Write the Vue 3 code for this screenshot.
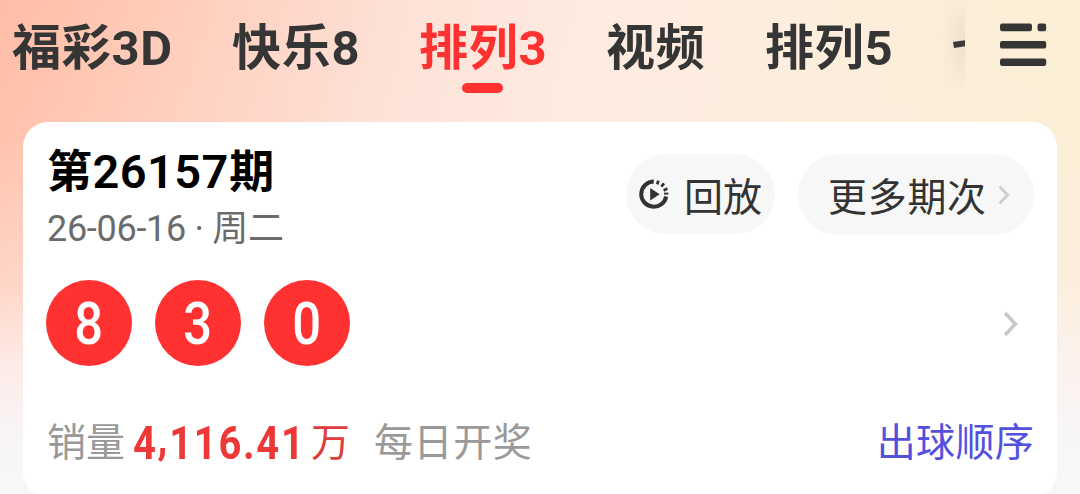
<script setup>
const tabs = [
  { name: '福彩3D', cls: 't1' },
  { name: '快乐8', cls: 't2' },
  { name: '排列3', cls: 't3', active: true },
  { name: '视频', cls: 't4' },
  { name: '排列5', cls: 't5' },
  { name: '七', cls: 't6' },
]
const balls = [8, 3, 0]
</script>

<template>
  <div class="page">
    <header class="top">
      <nav class="tabs">
        <span v-for="t in tabs" :key="t.name" class="tab" :class="[t.cls, { active: t.active }]">{{ t.name }}<i v-if="t.active" class="bar"></i></span>
        <span class="fade"></span>
      </nav>
      <svg class="menu" width="48" height="46" viewBox="0 0 48 46" fill="#353535">
        <rect x="0" y="0.6" width="32" height="7.6" rx="2.2" />
        <rect x="37.5" y="0.6" width="8.7" height="7.6" rx="2.2" />
        <rect x="0" y="18" width="46.2" height="7.6" rx="2.2" />
        <rect x="0" y="35.4" width="46.2" height="7.6" rx="2.2" />
      </svg>
    </header>

    <main class="card">
      <div class="head">
        <div class="issue">
          <h1>第<span class="num">26157</span>期</h1>
          <p>26-06-16 · 周二</p>
        </div>
        <div class="actions">
          <div class="pill replay">
            <svg width="30" height="31" viewBox="0 0 30 31" fill="none" stroke="#333">
              <path d="M14.8 2.5A12.6 12.6 0 1 0 27.2 17.5" stroke-width="4" />
              <path d="M18.3 5.4L19.3 1.6M22.3 7.6L25 4.4M24.6 11.4L28.4 9.6" stroke-width="2.8" />
              <path d="M25 14.6h4.4" stroke-width="2" />
              <path d="M11.2 9v12.4l9.4-6.2z" fill="#333" stroke="none" />
            </svg>
            <span>回放</span>
          </div>
          <div class="pill more">
            <span>更多期次</span>
            <svg width="12" height="20" viewBox="0 0 12 20" fill="none" stroke="#ccc" stroke-width="2.6"><path d="M1.5 1.5L9.7 10L1.5 18.5" /></svg>
          </div>
        </div>
      </div>

      <div class="draw">
        <div class="balls">
          <span v-for="b in balls" :key="b" class="ball"><b>{{ b }}</b></span>
        </div>
        <svg width="16" height="26" viewBox="0 0 16 26" fill="none" stroke="#c8c8c8" stroke-width="3.6"><path d="M2 3L12.3 14L2 25" /></svg>
      </div>

      <div class="foot">
        <span class="label">销量</span>
        <span class="amount"><b>4<i>,</i>116.41</b></span>
        <span class="unit">万</span>
        <span class="daily">每日开奖</span>
        <span class="order">出球顺序</span>
      </div>
    </main>
  </div>
</template>

<style>
body { margin: 0; overflow: hidden; }
</style>

<style scoped>
.page {
  width: 1080px;
  height: 494px;
  overflow: hidden;
  box-sizing: border-box;
  font-family: Roboto, "Noto Sans CJK SC", sans-serif;
  background:
    linear-gradient(180deg, rgba(255,242,242,0) 0%, rgba(255,242,242,.08) 28%, rgba(255,240,236,.45) 58%, rgba(252,243,243,.85) 75%, rgba(248,246,249,.97) 88%, #f7f7fa 100%),
    linear-gradient(97deg, #ffbda6 0%, #ffcfbd 17%, #fde2d7 36%, #feebe1 52%, #fdeedd 70%, #fbeed8 85%, #faeed2 100%);
}
.top {
  display: flex;
  height: 122px;
}
.tabs {
  position: relative;
  display: flex;
  width: 965px;
  height: 122px;
  overflow: hidden;
  flex: none;
}
.tab {
  position: relative;
  flex: none;
  height: 98px;
  line-height: 98px;
  font-size: 49px;
  letter-spacing: .7px;
  font-weight: 700;
  color: #353535;
  white-space: nowrap;
}
.t1 { margin-left: 12px; width: 220px; }
.t2 { width: 187px; }
.t3 { width: 187px; }
.t4 { width: 159px; }
.t5 { width: 186px; }
.active { color: #ff3131; }
.bar {
  position: absolute;
  left: 43px;
  top: 83px;
  width: 41px;
  height: 10px;
  border-radius: 5px;
  background: #ff3131;
}
.fade {
  position: absolute;
  right: 0;
  top: 0;
  width: 24px;
  height: 90px;
  background: linear-gradient(90deg, rgba(120,110,100,0), rgba(120,110,100,.1));
  mask-image: linear-gradient(180deg, transparent, #000 40%, #000 55%, transparent);
}
.menu { margin: 23px 0 0 35px; }
.card {
  box-sizing: border-box;
  width: 1034px;
  height: 375px;
  margin-left: 23px;
  border-radius: 25px;
  background: #fff;
  padding: 0 23px;
}
.head {
  display: flex;
  justify-content: space-between;
  height: 158px;
}
h1 {
  margin: 21px 0 0 1px;
  height: 58px;
  line-height: 58px;
  font-size: 45px;
  font-weight: 700;
  color: #000;
  white-space: nowrap;
}
.num { font-weight: 600; font-size: 47px; letter-spacing: .4px; margin: 0 .5px; }
p {
  margin: 6px 0 0 1px;
  height: 44px;
  line-height: 44px;
  font-size: 36px;
  letter-spacing: -.3px;
  color: #6b6b6b;
  white-space: nowrap;
}
.actions {
  display: flex;
  gap: 23px;
  padding-top: 32px;
}
.pill {
  box-sizing: border-box;
  display: flex;
  align-items: center;
  height: 81px;
  border-radius: 41px;
  background: #f7f7f7;
  font-size: 39px;
  color: #333;
  white-space: nowrap;
}
.replay { width: 149px; height: 80px; padding-left: 13px; }
.replay span { margin-left: 15px; }
.more { width: 236px; padding-left: 30px; }
.more span { letter-spacing: .7px; padding-bottom: 2px; }
.more svg { margin-left: 11px; }
.draw {
  display: flex;
  align-items: center;
  justify-content: space-between;
  height: 86px;
  padding-right: 15px;
}
.balls { display: flex; gap: 23px; }
.ball {
  width: 86px;
  height: 86px;
  border-radius: 50%;
  background: #ff3131;
  color: #fff;
  text-align: center;
  line-height: 88px;
  font-size: 59px;
}
.ball b { display: inline-block; font-weight: 500; transform: scaleX(.86); }
.foot {
  display: flex;
  height: 60px;
  line-height: 60px;
  margin-top: 47px;
  font-size: 39px;
  white-space: nowrap;
  color: #999;
}
.label { width: 86px; margin-left: 1px; }
.amount { width: 178px; font-size: 47px; color: #ee3838; }
.amount b { display: inline-block; font-weight: 700; letter-spacing: 2px; line-height: 56px; transform: scaleX(.85); transform-origin: 0 50%; }
.amount i { font-style: normal; position: relative; top: -5px; }
.unit { width: 63px; color: #e03c3c; }
.daily { flex: 1; letter-spacing: .6px; }
.order { color: #5450de; letter-spacing: .3px; }
</style>
